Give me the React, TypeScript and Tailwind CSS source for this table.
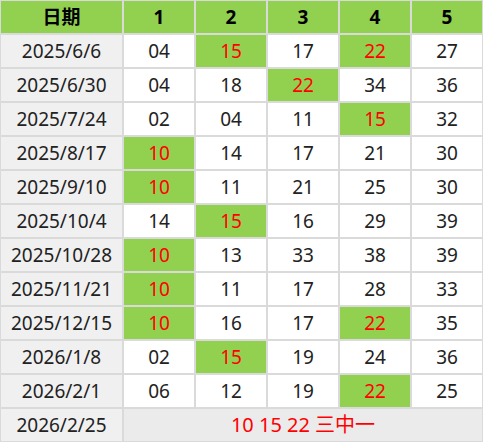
const rows: { date: string; nums: string[]; hits: number[] }[] = [
  { date: '2025/6/6', nums: ['04', '15', '17', '22', '27'], hits: [1, 3] },
  { date: '2025/6/30', nums: ['04', '18', '22', '34', '36'], hits: [2] },
  { date: '2025/7/24', nums: ['02', '04', '11', '15', '32'], hits: [3] },
  { date: '2025/8/17', nums: ['10', '14', '17', '21', '30'], hits: [0] },
  { date: '2025/9/10', nums: ['10', '11', '21', '25', '30'], hits: [0] },
  { date: '2025/10/4', nums: ['14', '15', '16', '29', '39'], hits: [1] },
  { date: '2025/10/28', nums: ['10', '13', '33', '38', '39'], hits: [0] },
  { date: '2025/11/21', nums: ['10', '11', '17', '28', '33'], hits: [0] },
  { date: '2025/12/15', nums: ['10', '16', '17', '22', '35'], hits: [0, 3] },
  { date: '2026/1/8', nums: ['02', '15', '19', '24', '36'], hits: [1] },
  { date: '2026/2/1', nums: ['06', '12', '19', '22', '25'], hits: [3] },
]

export default function App() {
  return (
    <div
      className="w-[483px] h-[442px] bg-[#dadada] p-px grid grid-cols-[121px_repeat(5,70px)] grid-rows-[repeat(13,32px)] gap-[2px] text-[19px] text-[#222]"
      style={{ fontFamily: '"Noto Sans", "Noto Sans CJK SC", sans-serif' }}
    >
      {['日期', '1', '2', '3', '4', '5'].map((h) => (
        <div key={h} className="bg-[#92d050] flex items-center justify-center font-bold text-[19px] text-black">
          {h}
        </div>
      ))}

      {rows.map((row) => (
        <div key={row.date} className="contents">
          <div className="bg-[#f0f0f0] flex items-center justify-center">{row.date}</div>
          {row.nums.map((n, i) => {
            const hit = row.hits.includes(i)
            return (
              <div
                key={i}
                className={`flex items-center justify-center ${
                  hit ? 'bg-[#92d050] text-[#ff0000]' : 'bg-white'
                }`}
              >
                {n}
              </div>
            )
          })}
        </div>
      ))}

      <div className="bg-[#f0f0f0] flex items-center justify-center">2026/2/25</div>
      <div className="col-span-5 bg-[#ebebeb] flex items-center justify-center text-[20px] text-[#ff0000]">
        10 15 22 三中一
      </div>
    </div>
  )
}
